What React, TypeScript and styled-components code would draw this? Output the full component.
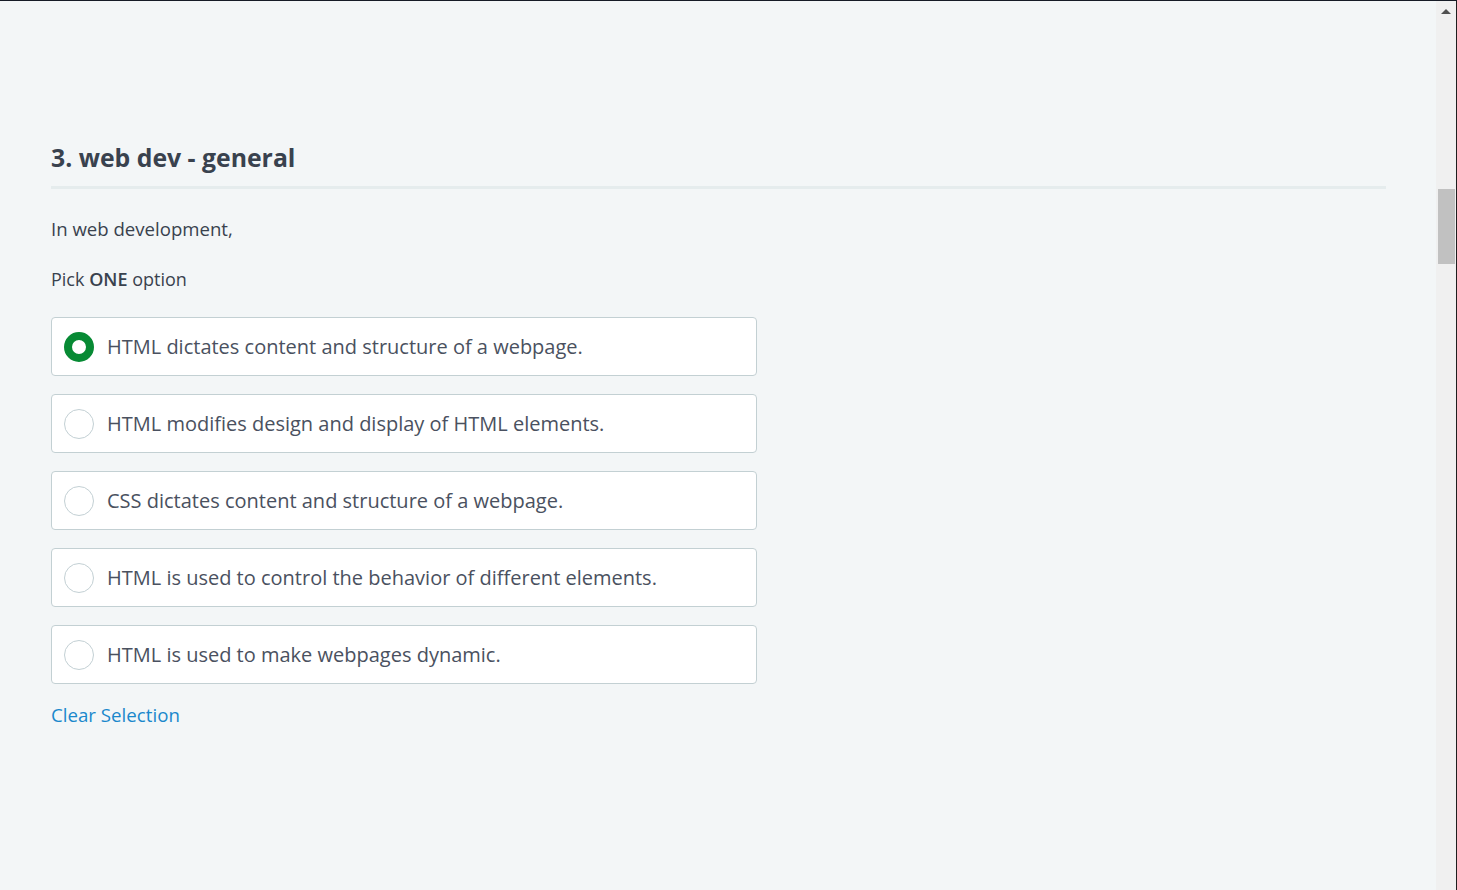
import React, { useState } from "react";
import styled, { createGlobalStyle } from "styled-components";

const Global = createGlobalStyle`
  html, body { margin: 0; padding: 0; }
  body {
    background: #f3f6f7;
    font-family: "Open Sans", "Liberation Sans", sans-serif;
    overflow: hidden;
  }
  * { box-sizing: border-box; }
`;

const Frame = styled.div`
  width: 1457px;
  height: 890px;
  display: flex;
  border-top: 1px solid #161b26;
  background: #f3f6f7;
`;

const Main = styled.main`
  flex: 1;
  padding: 139px 50px 0 51px;
  color: #39424e;
`;

const Heading = styled.h2`
  margin: 0;
  font-size: 24.8px;
  font-weight: 700;
  line-height: 34px;
  color: #39424e;
  padding-bottom: 12px;
  border-bottom: 3px solid #e5eced;
`;

const Para = styled.p<{ $top: number; $size: number }>`
  margin: ${(p) => p.$top}px 0 0;
  font-size: ${(p) => p.$size}px;
  line-height: 25px;
  color: #39424e;
  strong { font-weight: 600; }
`;

const Options = styled.div`
  margin-top: 25px;
  width: 706px;
  display: flex;
  flex-direction: column;
  gap: 18px;
`;

const Option = styled.label`
  height: 59px;
  display: flex;
  align-items: center;
  gap: 13px;
  padding: 0 12px;
  background: #ffffff;
  border: 1px solid #c3d0d3;
  border-radius: 4px;
  cursor: pointer;
`;

const Radio = styled.span<{ $checked: boolean }>`
  width: 30px;
  height: 30px;
  flex: 0 0 30px;
  border-radius: 50%;
  background: #ffffff;
  border: ${(p) => (p.$checked ? "8px solid #078a34" : "1px solid #c3d0d4")};
`;

const OptionText = styled.span`
  font-size: 20px;
  line-height: 27px;
  color: #4a5160;
`;

const ClearLink = styled.a`
  display: inline-block;
  margin-top: 18px;
  font-size: 18.7px;
  line-height: 25px;
  color: #1a88cc;
  text-decoration: none;
  cursor: pointer;
`;

const Scrollbar = styled.div`
  width: 20px;
  background: #f0f0f0;
  display: flex;
  flex-direction: column;
  align-items: center;
`;

const ArrowUp = styled.div`
  margin-top: 8px;
  width: 0;
  height: 0;
  border-left: 5px solid transparent;
  border-right: 5px solid transparent;
  border-bottom: 5px solid #505050;
`;

const Thumb = styled.div`
  margin-top: 175px;
  width: 17px;
  height: 75px;
  background: #c1c1c1;
`;

const Edge = styled.div`
  width: 1px;
  background: #1e1e1e;
`;

const OPTIONS = [
  "HTML dictates content and structure of a webpage.",
  "HTML modifies design and display of HTML elements.",
  "CSS dictates content and structure of a webpage.",
  "HTML is used to control the behavior of different elements.",
  "HTML is used to make webpages dynamic.",
];

export default function App() {
  const [selected, setSelected] = useState<number | null>(0);
  return (
    <>
      <Global />
      <Frame>
        <Main>
          <Heading>3. web dev - general</Heading>
          <Para $top={27} $size={18.6}>In web development,</Para>
          <Para $top={26} $size={18}>
            Pick <strong>ONE</strong> option
          </Para>
          <Options>
            {OPTIONS.map((o, i) => (
              <Option key={i} onClick={() => setSelected(i)}>
                <Radio $checked={selected === i} />
                <OptionText>{o}</OptionText>
              </Option>
            ))}
          </Options>
          <ClearLink onClick={() => setSelected(null)}>Clear Selection</ClearLink>
        </Main>
        <Scrollbar>
          <ArrowUp />
          <Thumb />
        </Scrollbar>
        <Edge />
      </Frame>
    </>
  );
}
